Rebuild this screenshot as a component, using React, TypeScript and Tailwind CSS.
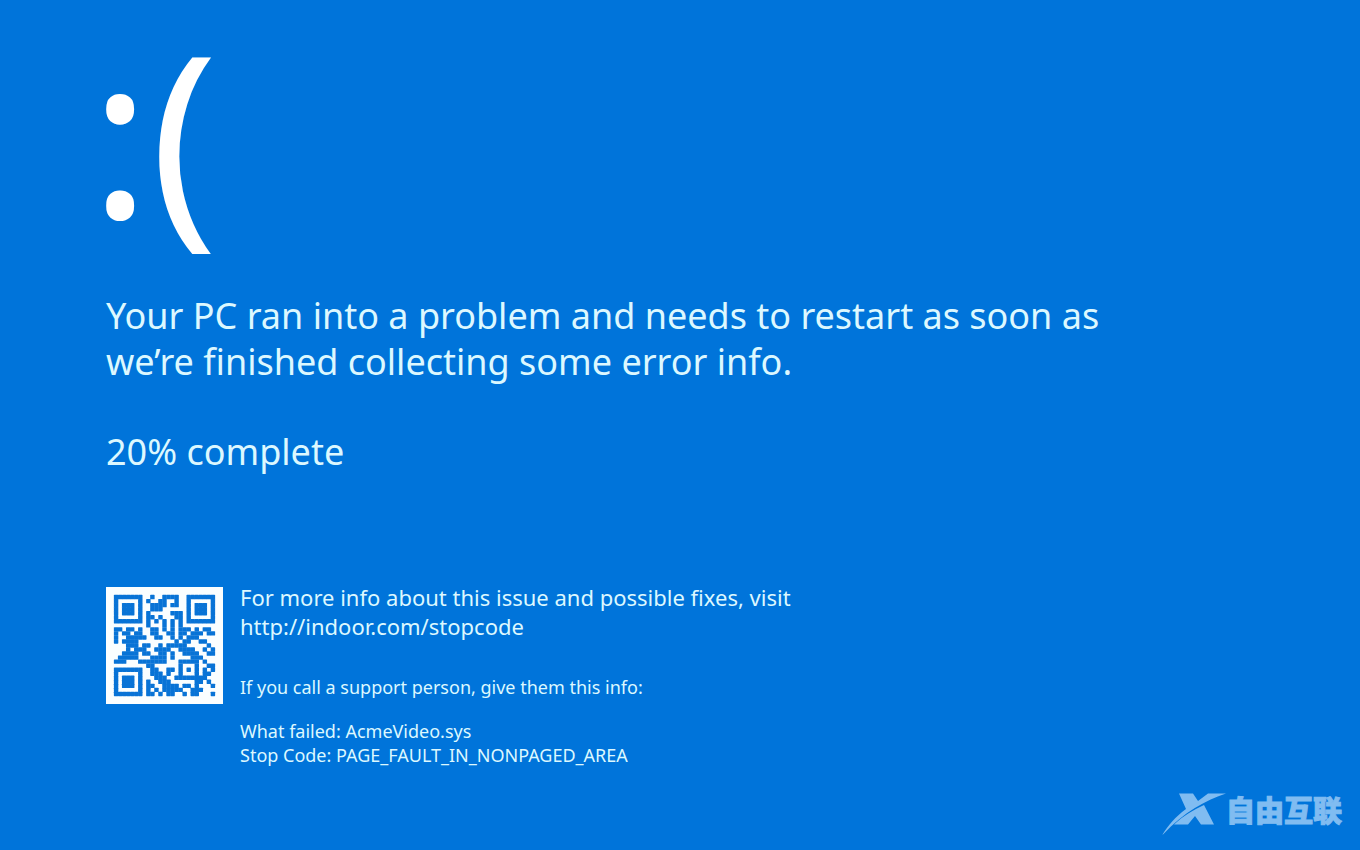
const QR_ROWS = [
  '1111111001001111001111111',
  '1000001010011001001000001',
  '1011101001111011001011101',
  '1011101001110000001011101',
  '1011101010000011101011101',
  '1000001011010001101000001',
  '1111111010101010101111111',
  '0000000010001010100000000',
  '1101101001101010111010110',
  '1011011001100110110111011',
  '1001111100110010101110000',
  '1011110000000001011001100',
  '0001110110010111110000010',
  '0001011100111100111100101',
  '0011110110011010011110011',
  '0111110001111010000111000',
  '1110001111111000111110100',
  '0000000011000000100010011',
  '1111111001100110101010101',
  '1000001001110100100010110',
  '1011101000111001111111100',
  '1011101010011100000011010',
  '1011101011001111011010001',
  '1000001010101111100111000',
  '1111111011010110010110001',
];

function QrCode() {
  return (
    <svg
      viewBox="0 0 29 29"
      className="w-[117px] h-[117px] shrink-0 bg-[#fafeff]"
      role="img"
      aria-label="QR code"
    >
      {QR_ROWS.map((row, y) =>
        row
          .split('')
          .map((cell, x) =>
            cell === '1' ? (
              <rect
                key={`${x}-${y}`}
                x={x + 1.95}
                y={y + 1.95}
                width="1.1"
                height="1.1"
                rx="0.15"
                fill="#0873d6"
              />
            ) : null,
          ),
      )}
    </svg>
  );
}

function BrandMark() {
  return (
    <div className="absolute right-[18px] bottom-[14px] flex items-start text-[#80bcf1]">
      <svg viewBox="0 0 64 44" className="w-16 h-11" fill="currentColor" aria-hidden="true">
        <path d="M17 1.500H31L36 9L46 1.500H64C44 8 22 20 1 42.500H0.500C6 34 13 25 24 17Z" />
        <path d="M42 13L52 32.500H39L33 24L26 32.500H12C21 24 31 18 42 13Z" />
      </svg>
      <span className="font-['Noto_Sans_CJK_SC',sans-serif] text-[29px] leading-[34px] font-black [-webkit-text-stroke:1px_#80bcf1]">
        自由互联
      </span>
    </div>
  );
}

export default function App() {
  return (
    <main className="relative min-h-screen bg-[#0074da] pl-[106px] pr-12 pt-px pb-16 font-['Noto_Sans','Open_Sans',sans-serif] text-[#dcf8ff]">
      <div className="-ml-4 text-[225px] leading-[260px] text-white">:(</div>

      <h1 className="mt-8 max-w-[1060px] text-[36px] leading-[46px]">
        Your PC ran into a problem and needs to restart as soon as
        <br />
        we’re finished collecting some error info.
      </h1>
      <p className="mt-11 text-[36px] leading-[46px]">20% complete</p>

      <section className="mt-28 flex items-start gap-[17px]">
        <QrCode />
        <div className="-mt-1">
          <p className="text-[22px] leading-[29px]">
            For more info about this issue and possible fixes, visit
            <br />
            <a href="http://indoor.com/stopcode">http://indoor.com/stopcode</a>
          </p>
          <p className="mt-[34px] text-[18px] leading-6">
            If you call a support person, give them this info:
          </p>
          <p className="mt-5 text-[18px] leading-6">
            What failed: AcmeVideo.sys
            <br />
            Stop Code: PAGE_FAULT_IN_NONPAGED_AREA
          </p>
        </div>
      </section>

      <BrandMark />
    </main>
  );
}
